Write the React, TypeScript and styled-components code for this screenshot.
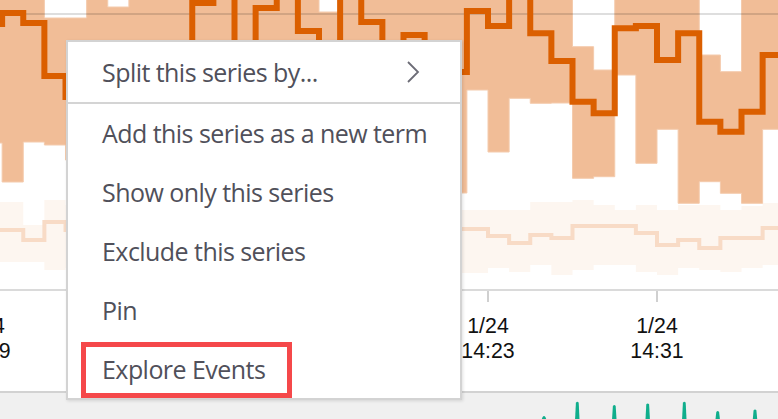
import React from "react";
import styled, { createGlobalStyle } from "styled-components";

const GlobalStyle = createGlobalStyle`
  html, body { margin: 0; padding: 0; background: #ffffff; }
  * { box-sizing: border-box; }
`;

const STEP = 21.125;
const X0 = 657 - 32 * STEP;

// step data, n = -1 .. 36
const LINE = [24, 13, 23, 76, 97, 112, 120, 92, 100, 62, 3, -10, 60, 8, -10, 31, 60, -10, 22, 60, 35, 60, 72, 11, 26, -10, 33.3, 61, 101.7, 113.3, 28.3, 26, 60, 33.3, 121.7, 131.7, 111.7, 55];
const TOP = [-10, -10, -10, 18, 18, -10, 7, -10, -10, -10, -10, -10, -10, -10, -10, -10, 12, -10, -10, -10, -10, -10, -10, -10, -10, -10, -10, -10, 46.7, 70, -10, -10, -10, -10, 55, 71.7, -10, -10];
const BOTTOM = [143, 182, 142, 145, 160, 170, 150, 180, 165, 175, 150, 160, 170, 150, 165, 180, 160, 150, 170, 160, 175, 165, 193, 90, 152, 98.3, 103.3, 103, 178.3, 176.7, 75, 163.3, 129.3, 203.3, 181.7, 193.3, 203.3, 129.3];
const F_TOP = [202, 202, 225, 200, 205, 205, 205, 205, 205, 205, 205, 205, 205, 205, 205, 205, 205, 205, 205, 205, 205, 205, 210, 210, 210, 210, 202, 202, 200, 205, 210, 205, 210, 205, 205, 210, 206, 203];
const F_BOTTOM = [262, 262, 262, 270, 268, 268, 268, 268, 268, 268, 268, 268, 268, 268, 268, 268, 268, 268, 268, 268, 268, 268, 273, 273, 268, 272, 265, 275, 270, 265, 265, 272, 275, 268, 270, 272, 268, 265];
const F_LINE = [230, 230, 240, 222, 230, 232, 228, 235, 230, 232, 228, 230, 234, 230, 228, 232, 230, 229, 233, 230, 231, 229, 229, 229, 236, 243, 235, 238, 226, 226, 226, 233, 245, 240, 248, 238, 238, 228];

const xAt = (i: number) => X0 + i * STEP;

function stepLine(vals: number[]) {
  let d = `M ${xAt(0)} ${vals[0]}`;
  vals.forEach((v, i) => {
    if (i > 0) d += ` V ${v}`;
    d += ` H ${xAt(i + 1)}`;
  });
  return d;
}

function stepBand(top: number[], bottom: number[]) {
  let d = `M ${xAt(0)} ${top[0]}`;
  top.forEach((v, i) => {
    if (i > 0) d += ` V ${v}`;
    d += ` H ${xAt(i + 1)}`;
  });
  for (let i = bottom.length - 1; i >= 0; i--) {
    d += ` V ${bottom[i]} H ${xAt(i)}`;
  }
  return d + " Z";
}

const TICKS = [
  { x: -16, date: "1/24", time: "13:59" },
  { x: 488, date: "1/24", time: "14:23" },
  { x: 657, date: "1/24", time: "14:31" },
];

const SPIKES = [
  { x: 544, top: 23 },
  { x: 577.3, top: 8.7 },
  { x: 614.3, top: 12 },
  { x: 647.7, top: 10.3 },
  { x: 684.3, top: 8.7 },
  { x: 717.7, top: 18 },
  { x: 755, top: 16.3 },
];

const MENU_ITEMS = [
  "Add this series as a new term",
  "Show only this series",
  "Exclude this series",
  "Pin",
];

const Page = styled.div`
  position: relative;
  width: 778px;
  height: 419px;
  overflow: hidden;
  display: flex;
  flex-direction: column;
  background: #ffffff;
  font-family: "Open Sans", "Noto Sans", sans-serif;
`;

const Plot = styled.svg`
  display: block;
  flex: none;
  width: 778px;
  height: 289px;
`;

const Axis = styled.div`
  position: relative;
  flex: none;
  height: 104px;
  border-top: 2px solid #dadada;
  border-bottom: 2px solid #d2d2d2;
`;

const Tick = styled.div`
  position: absolute;
  top: 0;
  width: 2px;
  height: 11px;
  margin-left: -1px;
  background: #d0d0d0;
`;

const TickLabel = styled.div`
  position: absolute;
  top: 23px;
  transform: translateX(-50%);
  display: flex;
  flex-direction: column;
  align-items: center;
  font-family: "Liberation Sans", Arial, sans-serif;
  font-size: 21.3px;
  color: #111111;
  white-space: nowrap;
`;

const LabelLine = styled.span`
  display: block;
  height: 24.5px;
  line-height: 24.5px;
`;

const Strip = styled.div`
  flex: 1;
  background: #f0f0f0;
`;

const StripChart = styled.svg`
  display: block;
  width: 778px;
  height: 26px;
`;

const Menu = styled.div`
  position: absolute;
  left: 66px;
  top: 40px;
  width: 396px;
  height: 360px;
  display: flex;
  flex-direction: column;
  background: #ffffff;
  border: 2px solid #d3d3d3;
  box-shadow: 1px 1px 3px rgba(0, 0, 0, 0.12);
`;

const MenuItem = styled.div<{ $h: number }>`
  position: relative;
  flex: none;
  height: ${(p) => p.$h}px;
  display: flex;
  align-items: center;
  justify-content: space-between;
  padding: 0 40px 0 34px;
  font-size: 25px;
  letter-spacing: -0.55px;
  color: #50505a;
  white-space: nowrap;
`;

const Separator = styled.div`
  flex: none;
  height: 2.5px;
  background: #d4d4d4;
`;

const Highlight = styled.div`
  position: absolute;
  left: 13px;
  bottom: 0;
  width: 211px;
  height: 56px;
  border: 5px solid #f5484a;
  pointer-events: none;
`;

const Chevron = styled.svg`
  display: block;
  width: 14px;
  height: 24px;
`;

export default function App() {
  return (
    <>
      <GlobalStyle />
      <Page>
        <Plot viewBox="0 0 778 289">
          <path d={stepBand(F_TOP, F_BOTTOM)} fill="#fdf6f0" />
          <path d={stepLine(F_LINE)} fill="none" stroke="#f8dbc6" strokeWidth={4} />
          <path d={stepBand(TOP, BOTTOM)} fill="#f1bd97" stroke="#f4cbad" strokeWidth={1} />
          <line x1={0} y1={14} x2={778} y2={14} stroke="rgba(0,0,0,0.13)" strokeWidth={2} />
          <path d={stepLine(LINE)} fill="none" stroke="#db5f00" strokeWidth={6} strokeLinejoin="miter" />
        </Plot>
        <Axis>
          {TICKS.map((t) => (
            <React.Fragment key={t.time}>
              <Tick style={{ left: t.x }} />
              <TickLabel style={{ left: t.x }}>
                <LabelLine>{t.date}</LabelLine>
                <LabelLine>{t.time}</LabelLine>
              </TickLabel>
            </React.Fragment>
          ))}
        </Axis>
        <Strip>
          <StripChart viewBox="0 0 778 26">
            {SPIKES.map((s) => (
              <path
                key={s.x}
                d={`M ${s.x - 2.2} 26 L ${s.x - 1.4} ${s.top + 1} Q ${s.x} ${s.top - 0.8} ${s.x + 1.4} ${s.top + 1} L ${s.x + 2.2} 26 Z`}
                fill="#10ae8c"
              />
            ))}
          </StripChart>
        </Strip>
        <Menu>
          <MenuItem $h={59.5}>
            <span>Split this series by...</span>
            <Chevron viewBox="0 0 14 24">
              <polyline points="2,2 12,12 2,22" fill="none" stroke="#6c6c76" strokeWidth={1.8} />
            </Chevron>
          </MenuItem>
          <Separator />
          {MENU_ITEMS.map((label) => (
            <MenuItem key={label} $h={58.8}>
              <span>{label}</span>
            </MenuItem>
          ))}
          <MenuItem $h={58.8}>
            <span>Explore Events</span>
            <Highlight />
          </MenuItem>
        </Menu>
      </Page>
    </>
  );
}
